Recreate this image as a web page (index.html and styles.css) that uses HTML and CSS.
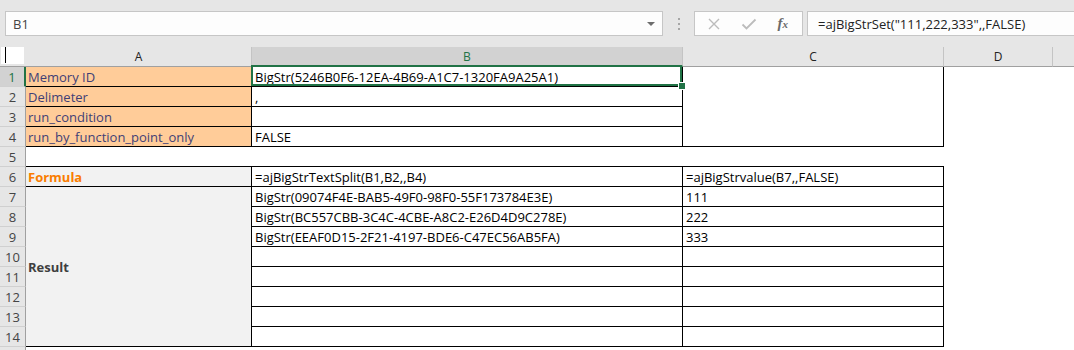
FILE: index.html
```html
<html>
  <head>
    <title>ajBigStrSet - Book1</title>
    <link rel="stylesheet" href="styles.css">
  </head>

  <body>
    <div class="toolbar">
      <div class="namebox">
        <span>B1</span>
        <span class="drop"></span>
      </div>
      <div class="grip">
        <span></span><span></span><span></span>
      </div>
      <div class="fxbox">
        <svg width="14" height="14" viewBox="0 0 14 14">
          <path d="M2 2 L12 12 M12 2 L2 12" stroke="#bcbcbc" stroke-width="1.4" fill="none" />
        </svg>
        <svg width="16" height="14" viewBox="0 0 16 14">
          <path d="M1.5 7.5 L5.5 11.5 L14.5 2.5" stroke="#bcbcbc" stroke-width="1.8" fill="none" />
        </svg>
        <span class="fx">f<small>x</small></span>
      </div>
      <div class="formula">=ajBigStrSet("111,222,333",,FALSE)</div>
    </div>

    <div class="sheet">
      <!-- column headers -->
      <div class="corner"><div class="corner-box"></div></div>
      <div class="ch">A</div>
      <div class="ch ch-sel">B</div>
      <div class="ch">C</div>
      <div class="ch">D</div>
      <div class="ch ch-last"></div>

      <!-- rows 1-4 -->
      <div class="rh rh-sel">1</div>
      <div class="cell bd input">Memory ID</div>
      <div class="cell bd sel">BigStr(5246B0F6-12EA-4B69-A1C7-1320FA9A25A1)<span class="handle"></span></div>
      <div class="cell bd span-c"></div>

      <div class="rh">2</div>
      <div class="cell bd input">Delimeter</div>
      <div class="cell bd">,</div>

      <div class="rh">3</div>
      <div class="cell bd input">run_condition</div>
      <div class="cell bd"></div>

      <div class="rh">4</div>
      <div class="cell bd input">run_by_function_point_only</div>
      <div class="cell bd">FALSE</div>

      <!-- row 5 -->
      <div class="rh">5</div>
      <div class="cell gap-row"></div>

      <!-- row 6 -->
      <div class="rh">6</div>
      <div class="cell bd calc">Formula</div>
      <div class="cell bd">=ajBigStrTextSplit(B1,B2,,B4)</div>
      <div class="cell bd">=ajBigStrvalue(B7,,FALSE)</div>

      <!-- rows 7-14 -->
      <div class="rh">7</div>
      <div class="cell bd output span-a">Result</div>
      <div class="cell bd">BigStr(09074F4E-BAB5-49F0-98F0-55F173784E3E)</div>
      <div class="cell bd">111</div>

      <div class="rh">8</div>
      <div class="cell bd">BigStr(BC557CBB-3C4C-4CBE-A8C2-E26D4D9C278E)</div>
      <div class="cell bd">222</div>

      <div class="rh">9</div>
      <div class="cell bd">BigStr(EEAF0D15-2F21-4197-BDE6-C47EC56AB5FA)</div>
      <div class="cell bd">333</div>

      <div class="rh">10</div>
      <div class="cell bd"></div>
      <div class="cell bd"></div>

      <div class="rh">11</div>
      <div class="cell bd"></div>
      <div class="cell bd"></div>

      <div class="rh">12</div>
      <div class="cell bd"></div>
      <div class="cell bd"></div>

      <div class="rh">13</div>
      <div class="cell bd"></div>
      <div class="cell bd"></div>

      <div class="rh">14</div>
      <div class="cell bd"></div>
      <div class="cell bd"></div>

      <div class="rh"></div>
    </div>
  </body>
</html>
```

FILE: styles.css
```css
body,
html {
  margin: 0;
  padding: 0;
  height: 100%;
  overflow: hidden;
  background-color: #ffffff;
  font-family: "Open Sans", "Liberation Sans", sans-serif;
}

/* formula bar */
.toolbar {
  height: 47px;
  box-sizing: border-box;
  padding: 11px 0 0 5px;
  background-color: #e6e6e6;
  display: flex;
  align-items: flex-start;
}

.namebox,
.fxbox,
.formula {
  height: 25px;
  box-sizing: border-box;
  border: 1px solid #c6c6c6;
  background-color: #fdfdfd;
  display: flex;
  align-items: center;
}

.namebox {
  width: 658px;
  padding: 0 6px 0 7px;
  justify-content: space-between;
  font-size: 13px;
  color: #444444;
}

.drop {
  width: 0;
  height: 0;
  border-left: 4px solid transparent;
  border-right: 4px solid transparent;
  border-top: 4px solid #6d6d6d;
  margin-right: 1px;
}

.grip {
  width: 31px;
  height: 25px;
  display: flex;
  flex-direction: column;
  align-items: center;
  justify-content: center;
  gap: 3px;
}

.grip span {
  width: 2px;
  height: 2px;
  background-color: #a6a6a6;
}

.fxbox {
  width: 109px;
  padding: 0 14px 0 12px;
  justify-content: space-between;
}

.fx {
  font-family: "Liberation Serif", serif;
  font-style: italic;
  font-weight: bold;
  font-size: 15px;
  color: #6a6a6a;
}

.fx small {
  font-size: 11px;
}

.formula {
  flex: 1;
  margin: 0 -5px 0 4px;
  padding-left: 10px;
  font-size: 13px;
  color: #222222;
}

/* grid */
.sheet {
  display: grid;
  grid-template-columns: 26px 226px 431px 261px 109px 1fr;
  grid-template-rows: 20px repeat(15, 20px);
  height: 303px;
  overflow: hidden;
  font-size: 13px;
}

.corner {
  background-color: #e6e6e6;
  border-bottom: 1px solid #a0a0a0;
  box-sizing: border-box;
  padding: 0 2px 0 1px;
}

.corner-box {
  height: 17px;
  background-color: #ffffff;
  border-left: 2px solid #ffffff;
  position: relative;
}

.corner-box::before {
  content: "";
  position: absolute;
  left: 2px;
  top: 0;
  width: 1px;
  height: 16px;
  background-color: #000000;
}

.ch {
  background-color: #e6e6e6;
  border-right: 1px solid #c4c4c4;
  border-bottom: 1px solid #a0a0a0;
  box-sizing: border-box;
  display: flex;
  align-items: center;
  justify-content: center;
  font-size: 12px;
  color: #222222;
}

.ch-sel {
  background-color: #d2d2d2;
  border-bottom: 2px solid #217346;
  color: #217346;
  padding-top: 1px;
}

.ch-last {
  border-right: none;
}

.rh {
  grid-column: 1;
  background-color: #e6e6e6;
  border-right: 1px solid #a0a0a0;
  border-bottom: 1px solid #d0d0d0;
  box-sizing: border-box;
  display: flex;
  align-items: center;
  justify-content: center;
  font-size: 13px;
  color: #444444;
}

.rh-sel {
  background-color: #d2d2d2;
  border-right: 2px solid #217346;
  color: #217346;
}

.cell {
  box-sizing: border-box;
  padding: 1px 3px 0 3px;
  display: flex;
  align-items: center;
  white-space: nowrap;
  color: #000000;
}

.bd {
  border-right: 1px solid #000000;
  border-bottom: 1px solid #000000;
}

.input {
  background-color: #ffcc99;
  color: #3f3f76;
  padding-left: 2px;
}

.calc {
  background-color: #f2f2f2;
  color: #fa7d00;
  font-weight: bold;
  padding-left: 2px;
}

.output {
  background-color: #f2f2f2;
  color: #3f3f3f;
  font-weight: bold;
  padding-left: 2px;
}

.span-c {
  grid-row: span 4;
}

.span-a {
  grid-row: span 8;
}

.gap-row {
  grid-column: span 3;
  border-bottom: 1px solid #000000;
}

/* active cell */
.sel {
  position: relative;
}

.sel::after {
  content: "";
  position: absolute;
  left: -1px;
  top: -2px;
  right: 0;
  bottom: 0;
  border: 2px solid #217346;
}

.handle {
  position: absolute;
  right: -3px;
  bottom: -3px;
  width: 6px;
  height: 6px;
  background-color: #217346;
  box-shadow: 0 0 0 1px #ffffff;
  z-index: 2;
}
```
